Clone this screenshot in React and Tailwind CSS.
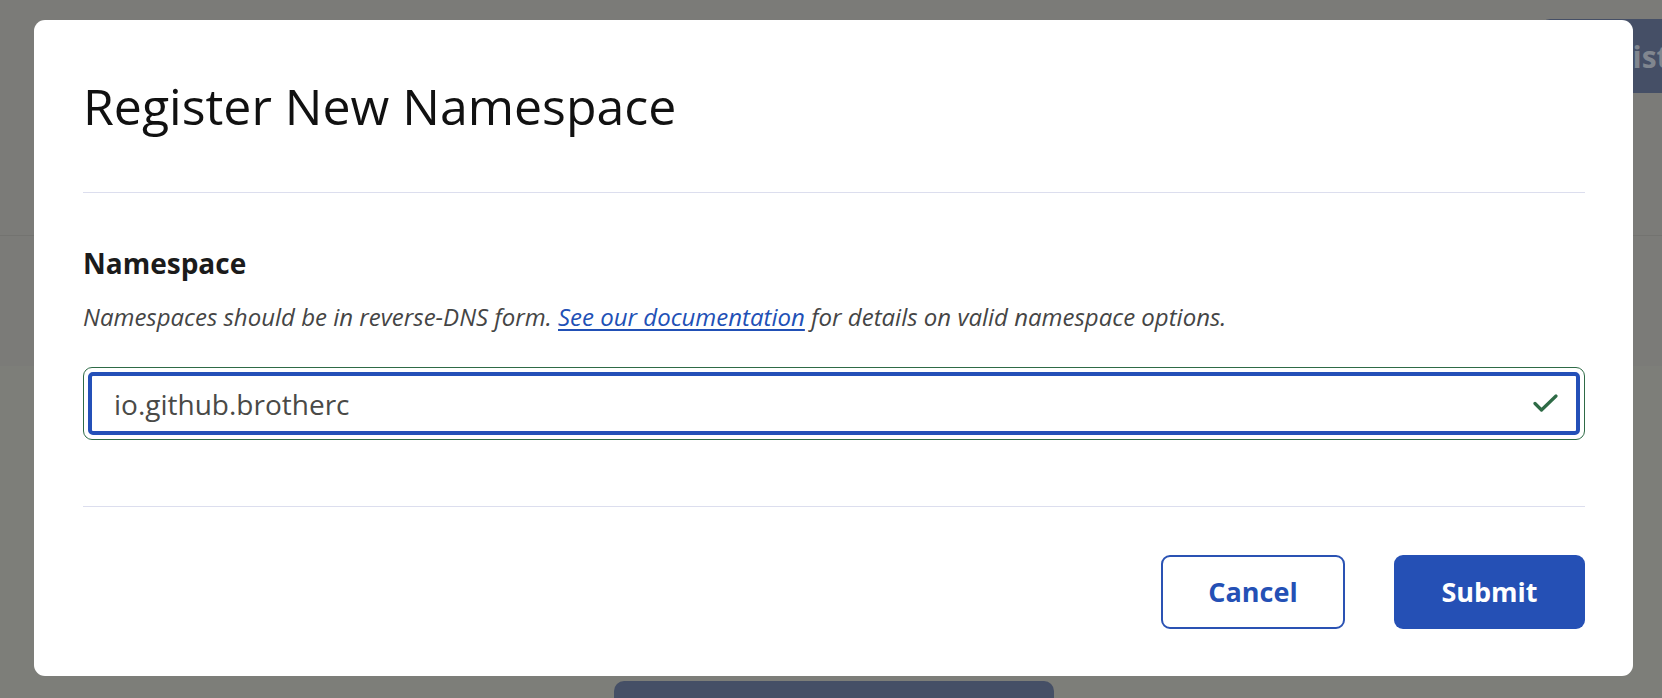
import React from "react"

// Register namespace dialog shown over a dimmed page.
const font = { fontFamily: '"Open Sans", "Liberation Sans", sans-serif' }

const CheckIcon = () => (
    <svg width="25" height="19" viewBox="0 0 25 19" fill="none">
        <path d="M2 9.5 L8.5 16 L23 2" stroke="#2e6b46" strokeWidth="3.2" strokeLinecap="round" strokeLinejoin="round" />
    </svg>
)

const BackgroundPage = () => (
    <div className="flex flex-col h-full">
        <header className="h-[236px] border-b border-[#737370] flex justify-end items-start pt-[19px]">
            <div className="h-[74px] w-[122px] shrink-0 rounded-l-[10px] bg-[#454f66] flex items-center pl-[38px] overflow-hidden">
                <span className="text-[30px] font-bold text-[#80868f] whitespace-nowrap">Register</span>
            </div>
        </header>
        <div className="h-[130px]" />
        <div className="flex-1 bg-[#7d7e79] flex items-end">
            <div className="ml-[614px] w-[440px] h-[17px] rounded-t-[10px] bg-[#454f66]" />
        </div>
    </div>
)

const NamespaceModal = () => (
    <div className="absolute left-[34px] top-[20px] w-[1599px] rounded-[11px] bg-white pl-[49px] pr-[48px] pt-[56px] pb-[47px]">
        <h1 className="text-[50px] leading-[60px] font-normal text-[#111111]">Register New Namespace</h1>
        <div className="mt-[56px] h-px bg-[#dcdeee]" />

        <label className="block mt-[52px] text-[28px] leading-[36px] font-bold text-[#1b1b1b]">Namespace</label>
        <p className="mt-[21px] text-[24px] leading-[30px] italic text-[#454545]">
            Namespaces should be in reverse-DNS form.{" "}
            <a href="#" className="text-[#2150b6] underline underline-offset-[3px]">See our documentation</a>
            {" "}for details on valid namespace options.
        </p>

        <div className="mt-[35px] h-[73px] rounded-[9px] border border-[#2e6b46] p-[4px]">
            <div className="h-full rounded-[5px] border-4 border-[#2450b8] flex items-center justify-between pl-[22px] pr-[18px]">
                <span className="text-[28px] text-[#4a4a47]">io.github.brotherc</span>
                <CheckIcon />
            </div>
        </div>

        <div className="mt-[66px] h-px bg-[#dcdeee]" />

        <div className="mt-[48px] flex justify-end gap-[49px]">
            <button className="w-[184px] h-[74px] rounded-[9px] border-2 border-[#2a52b3] bg-white text-[27px] font-bold text-[#2450b5]">
                Cancel
            </button>
            <button className="w-[191px] h-[74px] rounded-[9px] bg-[#2550b5] text-[27px] font-bold text-white">
                Submit
            </button>
        </div>
    </div>
)

export default function App() {
    return (
        <div className="relative w-[1662px] h-[698px] overflow-hidden bg-[#7b7b78]" style={font}>
            <BackgroundPage />
            <NamespaceModal />
        </div>
    )
}
